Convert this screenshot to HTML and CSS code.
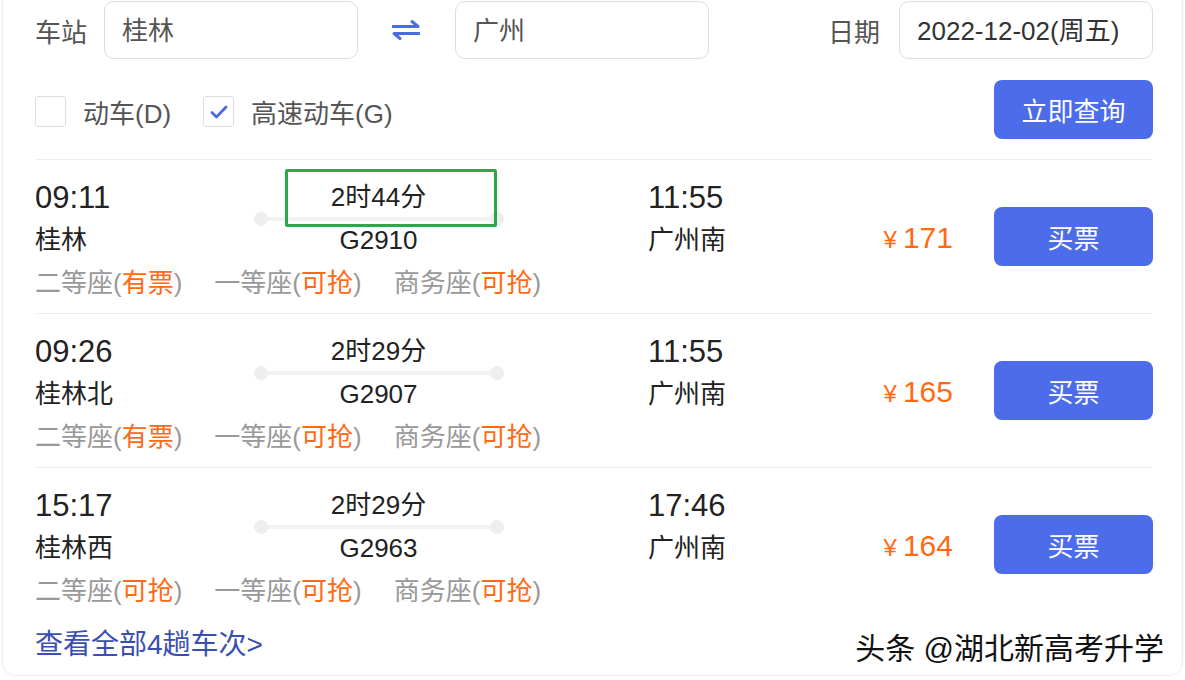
FILE: index.html
```html
<!DOCTYPE html>
<html lang="zh-CN">
<head>
    <meta charset="UTF-8">
    <meta name="viewport" content="width=device-width, initial-scale=1.0">
    <title>火车票查询</title>
    <link rel="stylesheet" href="styles.css">
</head>
<body>
    <div class="card">
        <div class="search-row">
            <span class="field-label">车站</span>
            <div class="field station">桂林</div>
            <span class="swap">
                <svg width="28" height="22" viewBox="0 0 28 22">
                    <path d="M1 7.5H26L20 2.5" fill="none" stroke="#4c6ce4" stroke-width="3" stroke-linecap="round" stroke-linejoin="round"/>
                    <path d="M27 14.5H2L8 19.5" fill="none" stroke="#4c6ce4" stroke-width="3" stroke-linecap="round" stroke-linejoin="round"/>
                </svg>
            </span>
            <div class="field station">广州</div>
            <span class="field-label date-label">日期</span>
            <div class="field date">2022-12-02(周五)</div>
        </div>

        <div class="filter-row">
            <span class="checkbox"></span>
            <span class="check-label">动车(D)</span>
            <span class="checkbox checked">
                <svg width="18" height="14" viewBox="0 0 18 14">
                    <path d="M2 7.5L6.5 12L16 2" fill="none" stroke="#4c6ce4" stroke-width="2.8" stroke-linecap="round" stroke-linejoin="round"/>
                </svg>
            </span>
            <span class="check-label">高速动车(G)</span>
            <button class="btn query-btn">立即查询</button>
        </div>

        <div class="train-list">
            <div class="train">
                <div class="train-info">
                    <div class="dep">
                        <div class="time">09:11</div>
                        <div class="station-name">桂林</div>
                    </div>
                    <div class="mid">
                        <div class="duration">2时44分</div>
                        <div class="track"></div>
                        <div class="code">G2910</div>
                        <span class="highlight"></span>
                    </div>
                    <div class="arr">
                        <div class="time">11:55</div>
                        <div class="station-name">广州南</div>
                    </div>
                    <div class="seats">
                        <span class="seat">二等座(<em>有票</em>)</span>
                        <span class="seat">一等座(<em>可抢</em>)</span>
                        <span class="seat">商务座(<em>可抢</em>)</span>
                    </div>
                </div>
                <div class="price"><small>¥</small>171</div>
                <button class="btn buy-btn">买票</button>
            </div>

            <div class="train">
                <div class="train-info">
                    <div class="dep">
                        <div class="time">09:26</div>
                        <div class="station-name">桂林北</div>
                    </div>
                    <div class="mid">
                        <div class="duration">2时29分</div>
                        <div class="track"></div>
                        <div class="code">G2907</div>
                    </div>
                    <div class="arr">
                        <div class="time">11:55</div>
                        <div class="station-name">广州南</div>
                    </div>
                    <div class="seats">
                        <span class="seat">二等座(<em>有票</em>)</span>
                        <span class="seat">一等座(<em>可抢</em>)</span>
                        <span class="seat">商务座(<em>可抢</em>)</span>
                    </div>
                </div>
                <div class="price"><small>¥</small>165</div>
                <button class="btn buy-btn">买票</button>
            </div>

            <div class="train">
                <div class="train-info">
                    <div class="dep">
                        <div class="time">15:17</div>
                        <div class="station-name">桂林西</div>
                    </div>
                    <div class="mid">
                        <div class="duration">2时29分</div>
                        <div class="track"></div>
                        <div class="code">G2963</div>
                    </div>
                    <div class="arr">
                        <div class="time">17:46</div>
                        <div class="station-name">广州南</div>
                    </div>
                    <div class="seats">
                        <span class="seat">二等座(<em>可抢</em>)</span>
                        <span class="seat">一等座(<em>可抢</em>)</span>
                        <span class="seat">商务座(<em>可抢</em>)</span>
                    </div>
                </div>
                <div class="price"><small>¥</small>164</div>
                <button class="btn buy-btn">买票</button>
            </div>
        </div>

        <a class="more" href="#">查看全部4趟车次&gt;</a>
        <div class="watermark">头条 @湖北新高考升学</div>
    </div>
</body>
</html>
```

FILE: styles.css
```css
body {
    margin: 0;
    padding: 0;
    background-color: #fff;
    font-family: "Liberation Sans", "Noto Sans CJK SC", sans-serif;
    font-size: 26px;
    color: #222;
}
.card {
    position: relative;
    margin: -14px 2px 0 2px;
    height: 690px;
    box-sizing: border-box;
    padding: 14px 29px 0 32px;
    border: 1px solid #eee;
    border-radius: 14px;
    box-shadow: 0 0 4px rgba(0, 0, 0, 0.04);
}

/* search row */
.search-row {
    display: flex;
    align-items: center;
    height: 58px;
}
.field-label {
    color: #555;
    margin-right: 17px;
}
.date-label {
    margin-left: auto;
    margin-right: 19px;
}
.field {
    width: 254px;
    height: 58px;
    box-sizing: border-box;
    padding-left: 17px;
    border: 1px solid #ddd;
    border-radius: 10px;
    line-height: 58px;
    color: #555;
}
.field.date {
    color: #333;
}
.swap {
    display: flex;
    margin: 0 35px 0 34px;
}

/* filter row */
.filter-row {
    display: flex;
    align-items: center;
    margin-top: 21px;
    height: 59px;
    padding-bottom: 20px;
    border-bottom: 1px solid #eee;
}
.checkbox {
    width: 31px;
    height: 31px;
    box-sizing: border-box;
    border: 1px solid #ddd;
    border-radius: 3px;
    display: flex;
    align-items: center;
    justify-content: center;
    margin-top: 4px;
}
.check-label {
    color: #555;
    margin: 4px 32px 0 17px;
}
.btn {
    width: 159px;
    height: 59px;
    border: none;
    border-radius: 8px;
    background-color: #4c6cea;
    color: #fff;
    font-family: inherit;
    font-size: 26px;
    cursor: pointer;
}
.query-btn {
    margin-left: auto;
}

/* trains */
.train {
    display: flex;
    align-items: center;
    padding: 16px 0 8px;
    border-bottom: 1px solid #eee;
}
.train:last-child {
    border-bottom: none;
}
.train-info {
    flex: 1;
    display: grid;
    grid-template-columns: 225px 237px 1fr;
    line-height: 43px;
}
.time {
    font-size: 31px;
}
.mid {
    position: relative;
    display: flex;
    flex-direction: column;
    align-items: stretch;
    text-align: center;
}
.track {
    position: relative;
    height: 4px;
    margin: -2px 7px;
    background-color: #f2f2f2;
}
.track::before,
.track::after {
    content: "";
    position: absolute;
    top: -5px;
    width: 14px;
    height: 14px;
    border-radius: 50%;
    background-color: #eee;
}
.track::before {
    left: -13px;
}
.track::after {
    right: -14px;
}
.highlight {
    position: absolute;
    top: -7px;
    left: 25px;
    width: 212px;
    height: 58px;
    box-sizing: border-box;
    border: 3px solid #2ba84a;
    border-radius: 2px;
}
.arr {
    padding-left: 151px;
}
.seats {
    grid-column: 1 / -1;
    display: flex;
    gap: 32px;
    color: #999;
}
.seat em {
    font-style: normal;
    color: #ff6a13;
}
.price {
    color: #ff6a13;
    font-size: 30px;
    margin-right: 41px;
    margin-bottom: 5px;
}
.price small {
    font-size: 24px;
    margin-right: 6px;
}
.buy-btn {
    margin-bottom: 8px;
}

/* footer */
.more {
    display: block;
    margin-top: 4px;
    line-height: 40px;
    font-size: 28px;
    color: #3a4fb0;
    text-decoration: none;
}
.watermark {
    position: absolute;
    right: 18px;
    top: 637px;
    font-size: 30px;
    color: #111;
    text-shadow: -1px -1px 0 #fff, 1px 1px 0 #fff;
}
```
